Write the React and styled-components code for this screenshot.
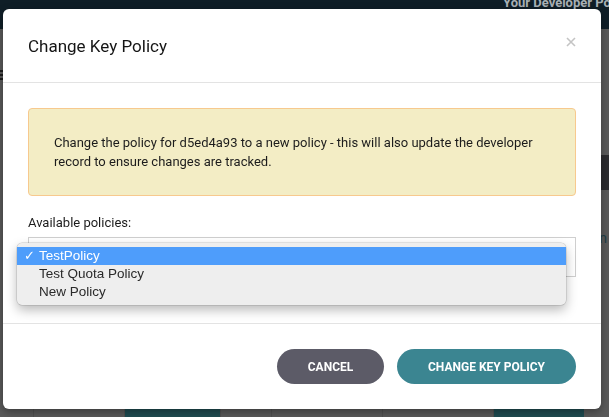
import React from "react";
import styled, { createGlobalStyle } from "styled-components";

const GlobalStyle = createGlobalStyle`
  html, body {
    margin: 0;
    padding: 0;
    height: 100%;
    overflow: hidden;
  }
  body {
    font-family: Roboto, "Liberation Sans", sans-serif;
    background: #595959;
  }
`;

const Page = styled.div`
  height: 417px;
  display: flex;
  flex-direction: column;
  background: #5a5a5a;
  overflow: hidden;
`;

const TopBar = styled.div`
  height: 29px;
  flex: none;
  display: flex;
  justify-content: flex-end;
  background: #0f1e27;
  overflow: hidden;
`;

const Brand = styled.span`
  margin: -5px -20px 0 0;
  width: 126px;
  font-size: 13px;
  font-weight: 700;
  line-height: 15px;
  color: #a9b1b6;
  white-space: nowrap;
`;

const Backdrop = styled.div`
  flex: 1;
  display: flex;
  flex-direction: column;
  padding-top: 41px;
`;

const Burger = styled.div`
  width: 4px;
  height: 10px;
  background: repeating-linear-gradient(#1d1d1d 0 2px, transparent 2px 4px);
`;

const SearchBar = styled.div`
  align-self: flex-end;
  margin-top: 75px;
  width: 40px;
  height: 35px;
  background: #2b2b2e;
  color: #7a7a7a;
  font-size: 16px;
  line-height: 35px;
  padding-left: 10px;
  box-sizing: border-box;
`;

const StrayText = styled.div`
  align-self: flex-end;
  margin: 40px 2px 0 0;
  font-size: 14px;
  color: #1f3e46;
`;

const CardRow = styled.div`
  margin-top: auto;
  height: 8px;
  display: flex;
`;

const Card = styled.div`
  width: ${(p) => p.$w}px;
  margin-left: ${(p) => p.$ml}px;
  background: ${(p) => (p.$teal ? "#1f4c52" : "transparent")};
  border-left: 1px solid #505050;
`;

const Overlay = styled.div`
  position: fixed;
  inset: 0;
  padding: 9px 0 0 3px;
`;

const Modal = styled.div`
  width: 598px;
  height: 400px;
  background: #fff;
  border-radius: 6px;
  display: flex;
  flex-direction: column;
  box-shadow: 0 3px 9px rgba(0, 0, 0, 0.35);
`;

const Header = styled.div`
  height: 73px;
  flex: none;
  display: flex;
  align-items: center;
  justify-content: space-between;
  padding: 0 25px;
  border-bottom: 1px solid #e3e3e3;
`;

const Title = styled.h4`
  margin: 0;
  font-size: 17px;
  font-weight: 400;
  color: #151515;
`;

const Close = styled.button`
  border: 0;
  background: none;
  padding: 0;
  width: 10px;
  height: 10px;
  margin-top: -7px;
  color: #c4c4c4;
  display: flex;
`;

const Body = styled.div`
  flex: 1;
  padding: 25px 25px 0;
`;

const Alert = styled.div`
  height: 88px;
  box-sizing: border-box;
  padding: 0 25px;
  display: flex;
  align-items: center;
  background: #f3edc5;
  border: 1px solid #f7c98e;
  border-radius: 4px;
  font-size: 13px;
  line-height: 19px;
  color: #1c1c1c;
`;

const Label = styled.label`
  display: block;
  margin-top: 18px;
  font-size: 13px;
  line-height: 18px;
  color: #1c1c1c;
`;

const SelectWrap = styled.div`
  position: relative;
  margin-top: 5px;
  height: 40px;
  box-sizing: border-box;
  border: 1px solid #cfcfcf;
  background: #fff;
`;

const Popup = styled.ul`
  position: absolute;
  left: -12px;
  top: 5px;
  width: 549px;
  margin: 0;
  padding: 4px 0;
  list-style: none;
  background: #eeeeee;
  border-radius: 5px;
  box-shadow: 0 0 0 0.5px rgba(0, 0, 0, 0.18), 0 5px 12px rgba(0, 0, 0, 0.28);
  font-family: "Liberation Sans", Arial, sans-serif;
  font-size: 13.5px;
`;

const Option = styled.li`
  height: 18px;
  line-height: 18px;
  display: flex;
  background: ${(p) => (p.$active ? "#4e9dfb" : "transparent")};
  color: ${(p) => (p.$active ? "#fff" : "#2a2a2a")};
`;

const Check = styled.span`
  width: 22px;
  padding-left: 7px;
  box-sizing: border-box;
  font-family: "DejaVu Sans", sans-serif;
  font-size: 13px;
  font-weight: 700;
`;

const Footer = styled.div`
  height: 85px;
  flex: none;
  display: flex;
  align-items: center;
  justify-content: flex-end;
  gap: 13px;
  padding: 0 25px;
  border-top: 1px solid #e3e3e3;
`;

const Button = styled.button`
  height: 35px;
  width: ${(p) => p.$w}px;
  border: 0;
  border-radius: 18px;
  background: ${(p) => (p.$primary ? "#3b8591" : "#5c5b67")};
  color: #fff;
  font-family: Roboto, "Liberation Sans", sans-serif;
  font-size: 12px;
  font-weight: 700;
  text-transform: uppercase;
`;

const policies = ["TestPolicy", "Test Quota Policy", "New Policy"];

export default function App() {
  return (
    <>
      <GlobalStyle />
      <Page>
        <TopBar>
          <Brand>Your Developer Portal</Brand>
        </TopBar>
        <Backdrop>
          <Burger />
          <SearchBar>Q</SearchBar>
          <StrayText>n</StrayText>
          <CardRow>
            <Card $w={20} $ml={33} />
            <Card $w={95} $ml={70} $teal />
            <Card $w={50} $ml={0} />
            <Card $w={110} $ml={0} />
            <Card $w={110} $ml={0} />
            <Card $w={90} $ml={0} $teal />
          </CardRow>
        </Backdrop>
      </Page>
      <Overlay>
        <Modal>
          <Header>
            <Title>Change Key Policy</Title>
            <Close aria-label="Close">
              <svg width="10" height="10" viewBox="0 0 10 10">
                <path d="M1 1L9 9M9 1L1 9" stroke="currentColor" strokeWidth="1.6" />
              </svg>
            </Close>
          </Header>
          <Body>
            <Alert>
              Change the policy for d5ed4a93 to a new policy - this will also update the developer record to ensure changes are tracked.
            </Alert>
            <Label>Available policies:</Label>
            <SelectWrap>
              <Popup>
                {policies.map((p, i) => (
                  <Option key={p} $active={i === 0}>
                    <Check>{i === 0 ? "✓" : ""}</Check>
                    {p}
                  </Option>
                ))}
              </Popup>
            </SelectWrap>
          </Body>
          <Footer>
            <Button $w={107}>Cancel</Button>
            <Button $w={179} $primary>
              Change Key Policy
            </Button>
          </Footer>
        </Modal>
      </Overlay>
    </>
  );
}
